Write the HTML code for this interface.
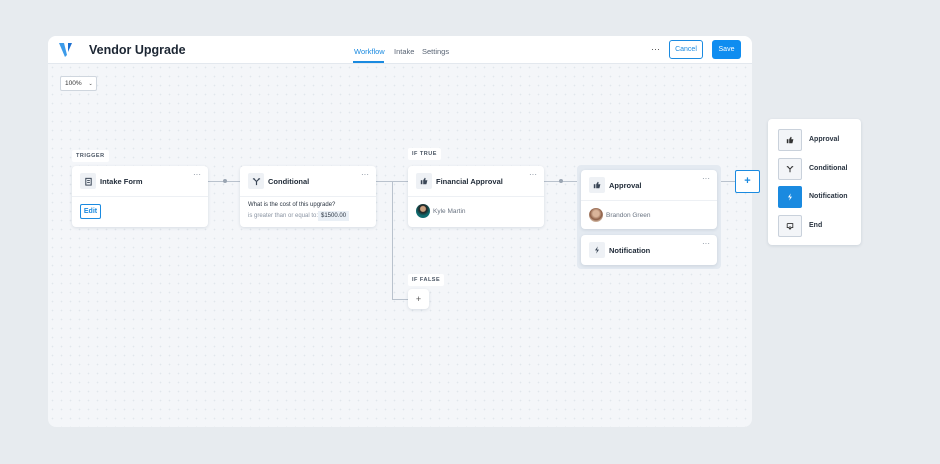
<!DOCTYPE html>
<html><head><meta charset="utf-8"><style>
*{box-sizing:border-box;margin:0;padding:0}
body{width:940px;height:464px;background:#e7ebef;font-family:"Liberation Sans",sans-serif;position:relative;overflow:hidden;color:#1f2a37}
.a{position:absolute}
.win{left:48px;top:36px;width:704px;height:391px;border-radius:8px;overflow:hidden;
background-image:radial-gradient(#e1e6ec 0.7px,transparent 0.9px);background-size:9px 9px;background-color:#f4f6f9}
.hdr{left:0;top:0;width:704px;height:28px;background:#fff;border-bottom:1px solid #e3e8ee}
.card{background:#fff;border-radius:4px;box-shadow:0 1px 3px rgba(20,40,70,.12)}
.ib{width:16px;height:16px;background:#eef1f5;border-radius:2px;display:flex;align-items:center;justify-content:center;font-size:8px;color:#3a4656}
.t{font-size:7.5px;font-weight:bold;color:#1f2a37}
.lbl{background:#fff;font-size:5.5px;font-weight:bold;color:#4a5563;letter-spacing:.5px;padding:3px 4px;border-radius:2px}
.dots{font-size:8px;color:#7a8594}
.ln{background:#b9c2cd}
.sep{height:1px;background:#edf0f4}
.pi{width:24px;height:22px;border:1px solid #c9d1db;border-radius:2px;background:#f3f5f8;display:flex;align-items:center;justify-content:center;font-size:8px;color:#333}
.pt{font-size:7px;font-weight:bold;color:#2a3441}
.btn{text-align:center;font-size:7px}
</style></head><body>
<svg width="0" height="0" style="position:absolute"><defs>
<symbol id="thumb" viewBox="0 0 10 10"><rect x="1" y="4" width="2" height="5" fill="currentColor"/><path d="M4 4 L6 1 Q7 1 7 2 L6.5 4 L9 4 Q9.5 4.5 9 5 L8 9 L4 9 Z" fill="currentColor"/></symbol>
<symbol id="cond" viewBox="0 0 10 10"><path d="M5 9 V5 M5 5 L2 2 M5 5 L8 2 M1 2 H3 M7 2 H9" stroke="currentColor" stroke-width="1.3" fill="none"/></symbol>
<symbol id="bolt" viewBox="0 0 10 10"><path d="M6 0.5 L2.5 5.5 H5 L4 9.5 L7.5 4.5 H5 Z" fill="currentColor"/></symbol>
<symbol id="end" viewBox="0 0 10 10"><path d="M1.5 2 H8.5 V7 H6 M4 7 H1.5 V2 M5 5 V9 M3.5 7.5 L5 9 L6.5 7.5" stroke="currentColor" stroke-width="1.1" fill="none"/></symbol>
<symbol id="form" viewBox="0 0 10 10"><rect x="2" y="1.5" width="6" height="7.5" stroke="currentColor" stroke-width="1.1" fill="none"/><path d="M3.5 4 H6.5 M3.5 6 H6.5" stroke="currentColor" stroke-width="1"/></symbol>
</defs></svg>
<div class="a win">
 <div class="a hdr">
  <svg class="a" style="left:10px;top:6px" width="16" height="16" viewBox="0 0 16 16"><path d="M1 1 L6 1 L9 13 L7 15 Z" fill="#3d9be9"/><path d="M10 1 L14 1 L10 10 Z" fill="#1b6fd1"/></svg>
  <div class="a" style="left:41px;top:7px;font-size:12.5px;font-weight:bold;color:#1c2633">Vendor Upgrade</div>
  <div class="a" style="left:306px;top:11px;font-size:7.5px;color:#1a8ae0">Workflow</div>
  <div class="a" style="left:305px;top:25px;width:31px;height:2px;background:#1a8ae0"></div>
  <div class="a" style="left:346px;top:11px;font-size:7.5px;color:#5a6575">Intake</div>
  <div class="a" style="left:374px;top:11px;font-size:7.5px;color:#5a6575">Settings</div>
  <div class="a" style="left:603px;top:8px;font-size:9px;color:#444">···</div>
  <div class="a btn" style="left:621px;top:4px;width:34px;height:19px;line-height:17px;border:1px solid #1a8ae0;border-radius:3px;color:#1a8ae0">Cancel</div>
  <div class="a btn" style="left:664px;top:4px;width:29px;height:19px;line-height:19px;background:#0f8df0;border-radius:3px;color:#fff">Save</div>
 </div>
 <div class="a" style="left:12px;top:40px;width:37px;height:15px;background:#fff;border:1px solid #cfd6de;border-radius:2px;font-size:6.5px;line-height:13px;padding-left:4px;color:#333">100% <span style="margin-left:5px;font-size:5px">⌄</span></div>
</div>

<div class="a ln" style="left:208px;top:181px;width:32px;height:1px"></div>
<div class="a" style="left:223px;top:179px;width:4px;height:4px;border-radius:2px;background:#9aa5b2"></div>
<div class="a ln" style="left:376px;top:181px;width:32px;height:1px"></div>
<div class="a ln" style="left:392px;top:181px;width:1px;height:118px"></div>
<div class="a ln" style="left:392px;top:299px;width:16px;height:1px"></div>
<div class="a ln" style="left:544px;top:181px;width:33px;height:1px"></div>
<div class="a" style="left:559px;top:179px;width:4px;height:4px;border-radius:2px;background:#9aa5b2"></div>
<div class="a ln" style="left:721px;top:181px;width:14px;height:1px"></div>

<div class="a lbl" style="left:72px;top:150px">TRIGGER</div>
<div class="a card" style="left:72px;top:166px;width:136px;height:61px">
 <div class="a ib" style="left:8px;top:7px"><svg width="9" height="9"><use href="#form"/></svg></div>
 <div class="a t" style="left:28px;top:11px">Intake Form</div>
 <div class="a dots" style="left:121px;top:4px">···</div>
 <div class="a sep" style="left:0;top:30px;width:136px"></div>
 <div class="a btn" style="left:8px;top:38px;width:21px;height:15px;line-height:13px;border:1px solid #1a8ae0;border-radius:2px;color:#1a8ae0;font-weight:bold">Edit</div>
</div>

<div class="a card" style="left:240px;top:166px;width:136px;height:61px">
 <div class="a ib" style="left:8px;top:7px"><svg width="9" height="9"><use href="#cond"/></svg></div>
 <div class="a t" style="left:28px;top:11px">Conditional</div>
 <div class="a dots" style="left:121px;top:4px">···</div>
 <div class="a sep" style="left:0;top:30px;width:136px"></div>
 <div class="a" style="left:8px;top:36px;font-size:6px;color:#2a3441">What is the cost of this upgrade?</div>
 <div class="a" style="left:8px;top:47px;font-size:6px;color:#8a94a2">is greater than or equal to:</div>
 <div class="a" style="left:78px;top:45px;background:#eaf0f6;font-size:6px;padding:2px 3px;color:#2a3441">$1500.00</div>
</div>

<div class="a lbl" style="left:408px;top:148px">IF TRUE</div>
<div class="a card" style="left:408px;top:166px;width:136px;height:61px">
 <div class="a ib" style="left:8px;top:7px"><svg width="8" height="8"><use href="#thumb"/></svg></div>
 <div class="a t" style="left:28px;top:11px">Financial Approval</div>
 <div class="a dots" style="left:121px;top:4px">···</div>
 <div class="a sep" style="left:0;top:30px;width:136px"></div>
 <div class="a" style="left:8px;top:38px;width:14px;height:14px;border-radius:7px;background:radial-gradient(circle at 50% 35%,#c9a07f 22%,#222 30%,#0f6b6f 60%)"></div>
 <div class="a" style="left:25px;top:42px;font-size:6.5px;color:#6a7482">Kyle Martin</div>
</div>

<div class="a" style="left:577px;top:165px;width:144px;height:104px;background:#e4eaf1;border-radius:4px"></div>
<div class="a card" style="left:581px;top:170px;width:136px;height:59px">
 <div class="a ib" style="left:8px;top:7px"><svg width="8" height="8"><use href="#thumb"/></svg></div>
 <div class="a t" style="left:28px;top:11px">Approval</div>
 <div class="a dots" style="left:121px;top:4px">···</div>
 <div class="a sep" style="left:0;top:30px;width:136px"></div>
 <div class="a" style="left:8px;top:38px;width:14px;height:14px;border-radius:7px;background:radial-gradient(circle at 50% 40%,#d9b49a 28%,#8a5c44 55%,#c9ab96 70%)"></div>
 <div class="a" style="left:25px;top:42px;font-size:6.5px;color:#6a7482">Brandon Green</div>
</div>
<div class="a card" style="left:581px;top:235px;width:136px;height:30px">
 <div class="a ib" style="left:8px;top:7px"><svg width="8" height="8"><use href="#bolt"/></svg></div>
 <div class="a t" style="left:28px;top:11px">Notification</div>
 <div class="a dots" style="left:121px;top:4px">···</div>
</div>

<div class="a lbl" style="left:408px;top:274px">IF FALSE</div>
<div class="a card" style="left:408px;top:289px;width:21px;height:20px;text-align:center;line-height:20px;font-size:9px;color:#555">+</div>

<div class="a" style="left:735px;top:170px;width:25px;height:23px;border:1.5px solid #1a8ae0;border-radius:2px;background:#fff;color:#1a8ae0;text-align:center;line-height:20px;font-size:11px;font-weight:bold">+</div>

<div class="a card" style="left:768px;top:119px;width:93px;height:126px;border-radius:4px">
 <div class="a pi" style="left:10px;top:10px"><svg width="8" height="8"><use href="#thumb"/></svg></div><div class="a pt" style="left:41px;top:17px">Approval</div>
 <div class="a pi" style="left:10px;top:39px"><svg width="8" height="8"><use href="#cond"/></svg></div><div class="a pt" style="left:41px;top:46px">Conditional</div>
 <div class="a pi" style="left:10px;top:67px;background:#1a8ae0;border-color:#1a8ae0;color:#fff"><svg width="8" height="8"><use href="#bolt"/></svg></div><div class="a pt" style="left:41px;top:74px">Notification</div>
 <div class="a pi" style="left:10px;top:96px"><svg width="8" height="8"><use href="#end"/></svg></div><div class="a pt" style="left:41px;top:103px">End</div>
</div>
</body></html>
